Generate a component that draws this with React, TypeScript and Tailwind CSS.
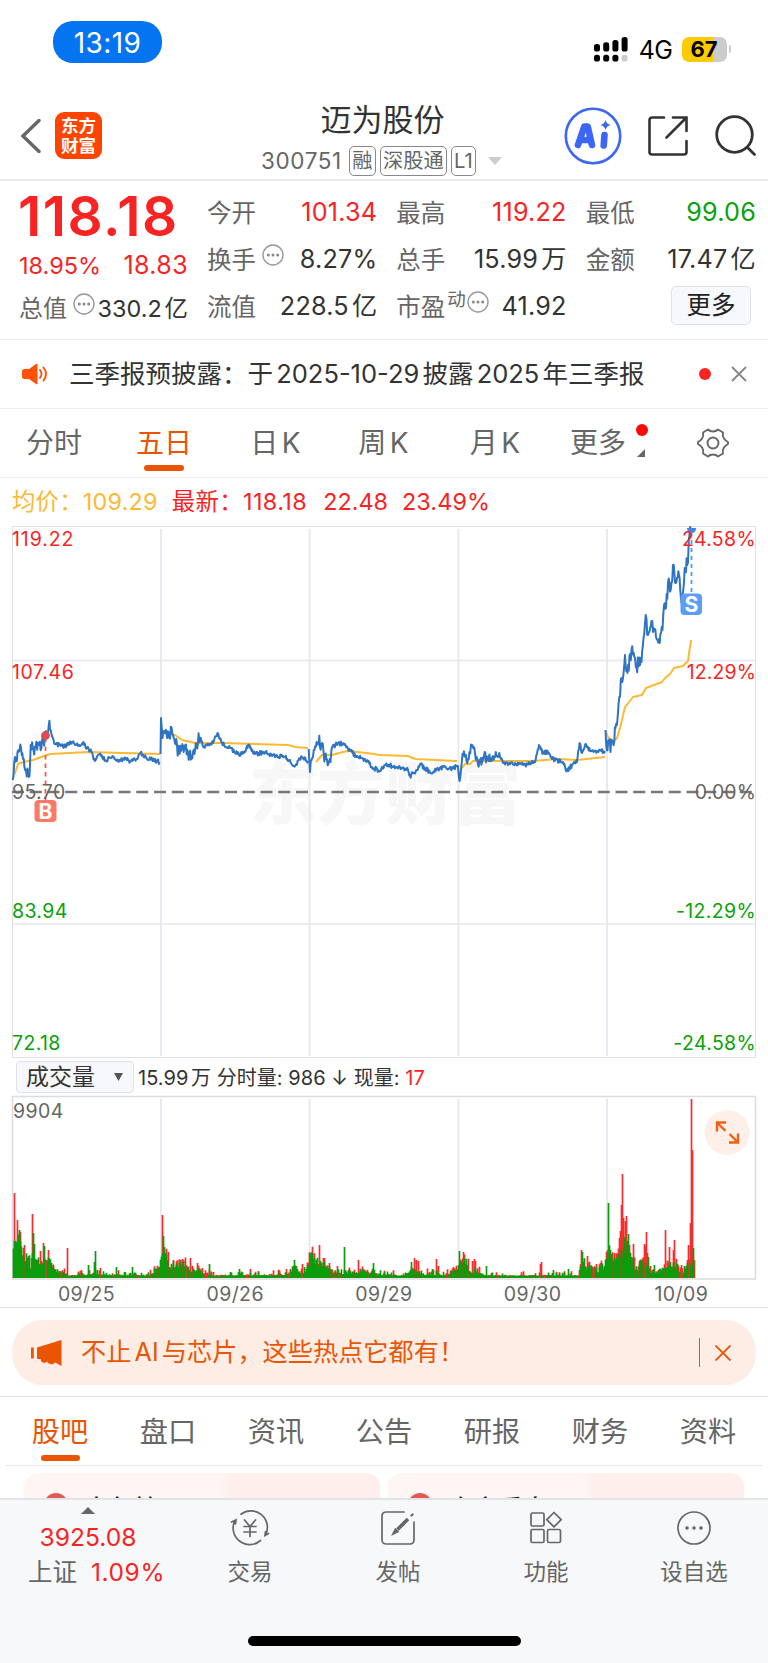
import { ReactNode } from "react";
import { clsx } from "clsx";

type Point = [number, number];

// price line per trading day: [x, y]
const PRICE_DAYS: Point[][] = [
  [
    [12.7, 780], [15, 757], [17.5, 752], [21, 748], [23, 759], [26, 770], [29.5, 776], [30.7, 745],
    [33.5, 750], [38.5, 745], [43.5, 741], [46, 731], [48, 733], [48.7, 726], [52, 736], [55, 744], [65, 746],
    [72, 742], [78, 746], [83.5, 742], [87, 748], [91.5, 752], [95, 761], [99.5, 754], [106, 761],
    [112.5, 756], [118, 761], [127.5, 758], [130, 762], [137.5, 759], [140.5, 753], [146.5, 758],
    [159.5, 762],
  ],
  [
    [160.5, 754], [161, 718], [162.5, 738], [166.5, 733], [173, 735], [177, 745], [179, 753],
    [183, 748], [188, 753], [193, 752], [200, 738], [204, 747], [213, 743], [217.5, 733], [222, 743],
    [230, 748], [237, 754], [242, 754], [249, 745], [255, 754], [265, 752], [272, 756], [283, 756],
    [290, 760], [294, 766], [302, 757], [308, 761],
  ],
  [
    [308.7, 749], [310, 772], [313, 757], [318, 744], [322, 743], [325, 757], [329, 762], [332, 747],
    [338, 743], [345, 744], [350, 751], [358, 757], [368, 761], [372, 767], [380, 771], [385, 765],
    [400, 767], [408, 770], [410, 776], [417, 770], [420, 764], [431, 773], [443, 767], [452, 769],
    [457, 766],
  ],
  [
    [457.7, 765], [459.6, 781], [462.5, 754], [468, 759], [471.7, 745], [475, 753], [478, 765],
    [484, 756], [488, 760], [493, 756], [500, 757], [503, 763], [515, 763], [523, 765], [535, 762],
    [539, 745], [543, 753], [548, 752], [552, 759], [563, 762], [567, 771], [572, 765], [577, 762],
    [579.6, 743], [582, 753], [585, 745], [590, 751], [597, 752], [605, 751],
  ],
  [
    [605.5, 730], [606.7, 750], [609, 742], [610.5, 752], [613, 742], [615.5, 728], [617, 725],
    [618.7, 702], [621.5, 678], [623, 678], [625, 655], [627.5, 673], [631.5, 650], [636.5, 667],
    [641.5, 662], [643.5, 638], [645.7, 615], [648, 635], [651.5, 621], [653, 632], [656, 637],
    [659.7, 643], [662.5, 630], [664, 605], [666, 608], [668, 583], [670.7, 590], [673, 565],
    [675.7, 583], [679, 575], [681.5, 603], [683.3, 590], [684.7, 568], [687.3, 565], [689.5, 535],
    [691.3, 528],
  ],
];

const AVERAGE_DAYS: Point[][] = [
  [[14.7, 774], [18, 764], [23, 762], [33, 760], [50, 754], [88, 752], [160, 754]],
  [[162, 733], [175, 735], [182, 740], [195, 743], [222, 743], [288, 745], [295, 747], [308, 748]],
  [[316, 762], [322, 755], [332, 755], [347, 751], [367, 753], [380, 755], [408, 756], [415, 759], [457, 761]],
  [[462, 768], [465, 764], [470, 764], [473, 761], [533, 761], [557, 759], [577, 760], [605, 757]],
  [
    [606, 732], [608, 737], [613, 742], [617, 738], [620, 728], [625, 707], [633, 697], [642, 695],
    [646, 688], [662, 682], [665, 678], [670, 674], [674, 668], [683, 666], [688, 661], [689.5, 650],
    [691.3, 640],
  ],
];

// volume: base level along x, then single tall bars on top of it
const VOLUME_BASE: Point[] = [
  [13, 25], [16, 36], [20, 45], [22, 20], [27, 22], [30, 12], [33, 30], [36, 20], [42, 12], [47, 18],
  [52, 11], [58, 6], [64, 6], [67, 2], [90, 3], [97, 5], [100, 3], [150, 3], [158, 9], [163, 30],
  [167, 14], [175, 10], [182, 14], [190, 8], [200, 6], [212, 2], [280, 3], [290, 4], [294, 14],
  [300, 4], [306, 8], [311, 22], [318, 12], [324, 13], [332, 6], [345, 5], [356, 6], [370, 5],
  [378, 4], [400, 2], [408, 6], [413, 8], [422, 4], [445, 3], [457, 8], [462, 22], [470, 6], [478, 6],
  [485, 2], [578, 2], [583, 20], [586, 9], [591, 12], [597, 7], [605, 15], [609, 26], [613, 17],
  [620, 22], [627, 30], [631, 18], [637, 8], [645, 20], [650, 6], [658, 8], [664, 10], [672, 10],
  [676, 12], [682, 6], [688, 12], [691, 14], [693, 12],
];

const RED_BARS: Point[] = [
  [14, 85], [17, 58], [32, 64], [23, 30], [40, 27], [43, 35], [48, 28], [67, 30], [81, 8], [100, 10],
  [162, 63], [168, 26], [173, 18], [180, 18], [190, 20], [197, 15], [202, 10], [250, 9], [286, 9],
  [302, 14], [319, 33], [323, 20], [337, 12], [358, 18], [414, 20], [416, 18], [418, 17], [436, 19],
  [438, 12], [463, 26], [472, 17], [474, 19], [475, 17], [540, 14], [541, 16], [581, 28], [587, 22],
  [600, 15], [606, 26], [617, 25], [619, 40], [620, 47], [621, 73], [622, 104], [623, 60], [625, 57],
  [626, 62], [627, 30], [633, 34], [644, 34], [646, 46], [647, 25], [665, 48], [669, 31], [674, 38],
  [673, 28], [688, 33], [690, 55], [691, 179], [692, 128], [694, 18],
];

const GREEN_BARS: Point[] = [
  [19, 48], [16, 36], [33, 45], [44, 32], [95, 27], [94, 16], [88, 13], [116, 11], [132, 11],
  [163, 42], [164, 31], [183, 17], [209, 14], [239, 9], [294, 18], [312, 24], [344, 31], [373, 15],
  [411, 16], [432, 9], [459, 27], [464, 20], [486, 12], [553, 8], [568, 9], [582, 26], [608, 75],
  [610, 28], [624, 41], [628, 44], [648, 21], [654, 13], [670, 16], [677, 14], [687, 15], [693, 30],
];

const rand = (n: number) => {
  const v = Math.sin(n * 127.1 + 11.7) * 43758.5453;
  return v - Math.floor(v);
};

const levelAt = (points: Point[], x: number) => {
  for (let i = 1; i < points.length; i++) {
    const [x0, y0] = points[i - 1];
    const [x1, y1] = points[i];
    if (x <= x1) return y0 + ((y1 - y0) * (x - x0)) / (x1 - x0);
  }
  return points[points.length - 1][1];
};

const noiseAt = (x: number) => {
  if (x < 50 || x > 606) return 8;
  if ((x > 162 && x < 200) || (x > 308 && x < 332)) return 8;
  if (x > 457 && x < 500) return 5;
  return 2.2;
};

const pricePath = (points: Point[]) => {
  const out: Point[] = [points[0]];
  points.slice(1).forEach((p, i) => {
    const prev = points[i];
    const steps = Math.max(1, Math.round((p[0] - prev[0]) / 0.7));
    for (let s = 1; s <= steps; s++) {
      const x = prev[0] + ((p[0] - prev[0]) * s) / steps;
      const y = prev[1] + ((p[1] - prev[1]) * s) / steps;
      out.push([x, s === steps ? y : y + (rand(x) - 0.5) * 2 * noiseAt(x)]);
    }
  });
  return "M" + out.map(([x, y]) => `${x.toFixed(1)} ${Math.max(527, y).toFixed(1)}`).join("L");
};

const linePath = (points: Point[]) => "M" + points.map((p) => p.join(" ")).join("L");

const barPath = (bars: Point[]) => bars.map(([x, h]) => `M${x + 0.5} 1278v${-h}`).join("");

const baseBars = Array.from({ length: 681 }, (_, i): Point => {
  const x = 13 + i;
  return [x, Math.max(2.5, levelAt(VOLUME_BASE, x) * (0.7 + rand(x) * 0.6) + (rand(x + 900) > 0.82 ? 3 : 0))];
});
const baseRed = baseBars
  .filter(([x]) => rand(x + 300) > 0.6)
  .map(([x, h]): Point => [x, h * 1.25]);
const baseGreen = baseBars.filter(([x]) => rand(x + 300) <= 0.78);

const MoreDots = ({ className }: { className?: string }) => (
  <svg viewBox="0 0 22 22" className={clsx("size-[22px] shrink-0", className)}>
    <circle cx="11" cy="11" r="10" fill="none" stroke="#999" strokeWidth="1.4" />
    {[6.3, 11, 15.7].map((x) => (
      <circle key={x} cx={x} cy="11" r="1.5" fill="#888" />
    ))}
  </svg>
);

const StatusBar = () => (
  <div className="flex h-[82px] items-start justify-between pl-[53px] pr-[37px]">
    <div className="mt-[21px] flex h-[42px] w-[109px] items-center justify-center rounded-[20px] bg-[#0474f0] pt-[1px] text-[28px] tracking-[0.4px] text-white">
      13:19
    </div>
    <div className="mt-[36px] flex h-[26px] items-center">
      <svg viewBox="0 0 34 25" className="mr-[11px] h-[25px] w-[34px]">
        {[7, 5.3, 3, 0].map((y, i) => (
          <rect key={i} x={i * 9.2} y={y} width="6" height={14.5 - y} rx="2.6" fill="#000" />
        ))}
        {[0, 1, 2, 3].map((i) => (
          <rect key={i} x={i * 9.2} y="17.7" width="6" height="6.8" rx="2.6" fill={i === 3 ? "#ccc" : "#000"} />
        ))}
      </svg>
      <span className="mr-[9px] pt-[2px] text-[25px] tracking-[-0.5px] text-black">4G</span>
      <div className="flex h-[25px] w-[45px] items-center justify-center rounded-[7px] bg-linear-to-r from-[#fecb00] from-[68%] to-[#ccc] to-[68%] text-[22px] font-bold text-black">
        67
      </div>
      <div className="ml-[2px] h-[8px] w-[2.5px] rounded-r-full bg-[#ccc]" />
    </div>
  </div>
);

const Badge = ({ children }: { children: ReactNode }) => (
  <span className="flex h-[30px] shrink-0 items-center whitespace-nowrap rounded-[5px] border-[1.4px] border-[#888] px-[2.5px] text-[20.2px]">
    {children}
  </span>
);

const Header = () => (
  <div className="flex h-[99px] items-start border-b-2 border-[#eaeaea]">
    <svg viewBox="0 0 20 34" className="ml-[21px] mt-[37px] h-[34px] w-[20px]">
      <path d="M18 1.5 2 17l16 15.5" fill="none" stroke="#666" strokeWidth="3.4" strokeLinecap="round" />
    </svg>
    <div className="ml-[14px] mt-[30px] flex h-[47px] w-[47px] flex-col items-center justify-center rounded-[9px] bg-[#ff4400] text-[17.5px] font-bold leading-[19.5px] text-white">
      <span>东方</span>
      <span>财富</span>
    </div>
    <div className="ml-[159px] flex w-[242px] flex-col items-center">
      <h1 className="flex h-[59px] items-center pl-[1px] pt-[16px] text-[31px] leading-[36px] text-[#333]">迈为股份</h1>
      <div className="mt-[5px] flex h-[30px] items-center self-start text-[22.5px] text-[#666]">
        <span className="mr-[7px] tracking-[0.6px]">300751</span>
        <div className="flex shrink-0 gap-[3.5px]">
          <Badge>融</Badge>
          <Badge>深股通</Badge>
          <Badge>L1</Badge>
        </div>
        <svg viewBox="0 0 14 8" className="ml-[12px] h-[8px] w-[14px] shrink-0">
          <path d="M0 0h14L7 8z" fill="#ccc" />
        </svg>
      </div>
    </div>
    <svg viewBox="0 0 58 58" className="ml-[61px] mt-[25px] size-[58px]">
      <circle cx="29" cy="29" r="27.2" fill="none" stroke="#3c66f5" strokeWidth="2.6" />
      <path
        d="M14 38 20.3 19.5h3.4L28 38M18 33h8"
        fill="none"
        stroke="#3c66f5"
        strokeWidth="6.6"
        strokeLinecap="round"
        strokeLinejoin="round"
      />
      <path d="m40.5 28-.8 10.5" stroke="#3c66f5" strokeWidth="6.6" strokeLinecap="round" />
      <path d="M41.5 13q.9 4 5 5-4.100 1-5 5-.9-4-5-5 4.100-1 5-5z" fill="#3c66f5" />
    </svg>
    <svg viewBox="0 0 40 40" className="ml-[26px] mt-[34px] size-[40px]" fill="none" stroke="#333" strokeWidth="2.6" strokeLinecap="round">
      <path d="M16 1.5H4A2.5 2.5 0 0 0 1.5 4v32A2.5 2.5 0 0 0 4 38.5h32a2.5 2.5 0 0 0 2.5-2.5V25" />
      <path d="M25 1.5h13.5V15M38 2 18.5 21.5" />
    </svg>
    <svg viewBox="0 0 42 42" className="ml-[27px] mt-[33px] size-[42px]" fill="none" stroke="#333" strokeWidth="2.8" strokeLinecap="round">
      <circle cx="19.5" cy="19.5" r="17.8" />
      <path d="m32.5 32.5 7 7" />
    </svg>
  </div>
);

const Cell = ({ label, value, tone }: { label: ReactNode; value: string; tone?: string }) => (
  <div className="flex items-center justify-between">
    <span className="flex items-center text-[24.5px] text-[#666]">{label}</span>
    <span className={clsx("whitespace-nowrap text-[25.2px] tracking-[0.2px]", tone ?? "text-[#333]")}>{value}</span>
  </div>
);

const Quote = () => (
  <div className="flex h-[159px] gap-[19px] border-b border-[#eee] pl-[19px] pr-[12px] pt-[8px] text-[25px]">
    <div className="w-[169px] shrink-0 text-[#f82424]">
      <div className="-ml-[1px] flex h-[54px] items-center text-[55px] font-semibold leading-none tracking-[1.5px]">118.18</div>
      <div className="flex h-[43px] items-center justify-between pt-[2px] text-[23.5px]">
        <span>18.95%</span>
        <span className="text-[25px] tracking-[0.4px]">18.83</span>
      </div>
      <div className="flex h-[43px] items-center pt-[2px]">
        <span className="text-[24px] text-[#666]">总值</span>
        <MoreDots className="-mt-[10px] ml-[6px]" />
        <span className="ml-auto whitespace-nowrap text-[23.4px] text-[#333]">330.2亿</span>
      </div>
    </div>
    <div className="grid flex-1 grid-cols-3 grid-rows-[47px_47px_47px] gap-x-[19px] pt-[0.5px]">
      <Cell label="今开" value="101.34" tone="text-[#f82424]" />
      <Cell label="最高" value="119.22" tone="text-[#f82424]" />
      <Cell label="最低" value="99.06" tone="text-[#09a209]" />
      <Cell label={<>换手<MoreDots className="-mt-[10px] ml-[6px]" /></>} value="8.27%" />
      <Cell label="总手" value="15.99万" />
      <Cell label="金额" value="17.47亿" />
      <Cell label="流值" value="228.5亿" />
      <Cell
        label={
          <>
            市盈<span className="-mt-4 ml-[2px] text-[18.5px]">动</span>
            <MoreDots className="-mt-[10px] ml-[1px]" />
          </>
        }
        value="41.92"
      />
      <button className="mr-[5px] mt-[2px] h-[39px] w-[80px] justify-self-end rounded-[5px] border border-[#dfe1e8] bg-[#f7f8fb] text-[24.5px] leading-none text-[#222]">
        更多
      </button>
    </div>
  </div>
);

const Notice = () => (
  <div className="flex h-[69px] items-center border-b border-[#eee] pl-[22px] pr-[21px]">
    <svg viewBox="0 0 26 22" className="h-[22px] w-[26px]">
      <path d="M2.500 6H7l7-5q1.500-.8 1.500 1v18q0 1.800-1.500 1l-7-5H2.500Q0 16 0 13.500v-5Q0 6 2.500 6z" fill="#ff5206" />
      <path d="M18 7q3 4 0 8M21.500 4.500q5 6.500 0 13" fill="none" stroke="#ff5206" strokeWidth="1.9" strokeLinecap="round" />
    </svg>
    <span className="ml-[21px] whitespace-nowrap text-[25.5px] text-[#333]">三季报预披露：于2025-10-29披露2025年三季报</span>
    <span className="ml-auto size-[12px] rounded-full bg-[#f82424]" />
    <svg viewBox="0 0 16 16" className="ml-[20px] size-[16px]">
      <path d="m1 1 14 14M15 1 1 15" stroke="#888" strokeWidth="1.9" />
    </svg>
  </div>
);

const PERIODS = [
  { name: "分时", width: "w-[108px]" },
  { name: "五日", width: "w-[112px]" },
  { name: "日K", width: "w-[111px]" },
  { name: "周K", width: "w-[105px]" },
  { name: "月K", width: "w-[118px]" },
];

const PeriodTabs = () => (
  <div className="flex h-[69px] items-center border-b border-[#eee] text-[28px] text-[#666]">
    {PERIODS.map(({ name, width }) => (
      <div
        key={name}
        className={clsx("relative flex h-full items-center justify-center", width, name === "五日" && "text-[#ea5504]")}
      >
        {name}
        {name === "五日" && <span className="absolute bottom-[6px] h-[6px] w-[40px] rounded-[3px] bg-[#ea5504]" />}
      </div>
    ))}
    <div className="relative ml-[16px] flex h-full items-center">
      更多
      <span className="absolute left-[66px] top-[15px] size-[12px] rounded-full bg-[#fb0a0a]" />
      <svg viewBox="0 0 8 8" className="absolute left-[67px] top-[40px] size-[8px]">
        <path d="M8 0v8H0z" fill="#666" />
      </svg>
    </div>
    <svg viewBox="0 0 32 30" className="ml-[71px] h-[30px] w-[32px]" fill="none" stroke="#666" strokeWidth="1.9">
      <path
        d="M11 1.500q2 2 5 2t5-2l5 3q-.7 3.500.8 5.800T31 14v2q-2.700 1.400-4.200 3.700T26 25.500l-5 3q-2-2-5-2t-5 2l-5-3q.7-3.500-.8-5.800T1 16v-2q2.700-1.400 4.200-3.700T6 4.500z"
        strokeLinejoin="round"
      />
      <circle cx="16" cy="15" r="5.5" />
    </svg>
  </div>
);

const PriceChart = () => (
  <svg viewBox="0 525 768 533" className="block h-[533px] w-[768px]" fontSize="19.5" letterSpacing="0.35">
    <text x="249" y="819" fontSize="68" fontWeight="900" fill="#f7f7f7" letterSpacing="0">东方财富</text>
    <g stroke="#e6e8f0" fill="none">
      <path d="M161 529v527M309.5 529v527M458.5 529v527M607 529v527" strokeWidth="1.8" />
      <path d="M12 660.5h743M12 924h743" strokeWidth="1.4" />
      <path d="M12.5 526.5h743v531h-743z" stroke="#dfdfe3" strokeWidth="1" />
    </g>
    <path d="M12 792h743" stroke="#777" strokeWidth="2.3" strokeDasharray="12 5.75" />
    <g fill="none" strokeLinejoin="round">
      {AVERAGE_DAYS.map((day, i) => (
        <path key={i} d={linePath(day)} stroke="#fdb933" strokeWidth="2" />
      ))}
      {PRICE_DAYS.map((day, i) => (
        <path key={i} d={pricePath(day)} stroke="#2f73c3" strokeWidth="2" />
      ))}
    </g>
    <path d="M45.5 738v62" stroke="#fa5a4b" strokeWidth="1.8" strokeDasharray="4.5 4" />
    <circle cx="45.5" cy="735.5" r="4.4" fill="#dc4c50" />
    <rect x="34.5" y="800" width="22" height="22" rx="4" fill="#fe7868" />
    <text x="45.5" y="818.5" fontSize="21" fontWeight="700" fill="#fff" textAnchor="middle">B</text>
    <path d="M691.5 532v62" stroke="#4f97ff" strokeWidth="1.8" strokeDasharray="4 4" />
    <path d="M687 528h9q0 5-4.500 5t-4.500-5z" fill="#3d86ef" />
    <rect x="680.5" y="593.5" width="21.5" height="21.5" rx="4" fill="#5b9dfb" />
    <text x="691.5" y="612" fontSize="21" fontWeight="700" fill="#fff" textAnchor="middle">S</text>
    <g fill="#f82424">
      <text x="12" y="546" letterSpacing="0.9">119.22</text>
      <text x="12" y="678.5" letterSpacing="0.6">107.46</text>
      <text x="756" y="546" textAnchor="end">24.58%</text>
      <text x="756" y="678.5" textAnchor="end" letterSpacing="0.1">12.29%</text>
    </g>
    <g fill="#666">
      <text x="12" y="798.5">95.70</text>
      <text x="756" y="798.5" textAnchor="end" letterSpacing="0.1">0.00%</text>
    </g>
    <g fill="#09a209">
      <text x="12" y="917.5">83.94</text>
      <text x="12" y="1050">72.18</text>
      <text x="756" y="917.5" textAnchor="end">-12.29%</text>
      <text x="756" y="1050" textAnchor="end">-24.58%</text>
    </g>
  </svg>
);

const VolumeBar = () => (
  <div className="flex h-[37px] items-center pl-[16px] text-[20px] text-[#333]">
    <button className="flex h-[32px] w-[118px] items-center justify-between rounded-[4px] border border-[#dfe1e8] bg-[#f7f8fb] pl-[9px] pr-[10px] pt-[1px] text-[23px] leading-none">
      成交量
      <svg viewBox="0 0 9 8" className="h-[8px] w-[9px]">
        <path d="M0 0h9L4.5 8z" fill="#555" />
      </svg>
    </button>
    <span className="ml-[4px] whitespace-pre pt-[2px] tracking-[0.05px]">15.99万 分时量: 986 ↓ 现量: </span>
    <span className="pt-[2px] text-[#f82424]">17</span>
  </div>
);

const VolumeChart = () => (
  <svg viewBox="0 1095 768 212" className="block h-[212px] w-[768px]" fontSize="19.5" letterSpacing="0.4" fill="#666">
    <path d="M161 1099v178M309.5 1099v178M458.5 1099v178M607 1099v178" stroke="#e6e8f0" strokeWidth="1.8" />
    <path d="M12.5 1096.5h743v182.5h-743z" fill="none" stroke="#dcdce0" strokeWidth="1.6" />
    <path d={barPath([...baseRed, ...RED_BARS])} stroke="#f82c2c" strokeWidth="1.7" />
    <path d={barPath([...baseGreen, ...GREEN_BARS])} stroke="#0a9c0a" strokeWidth="1.7" />
    <text x="13" y="1118">9904</text>
    {["09/25", "09/26", "09/29", "09/30", "10/09"].map((date, i) => (
      <text key={date} x={86.5 + i * 148.7} y="1301" textAnchor="middle">
        {date}
      </text>
    ))}
    <circle cx="727" cy="1132.5" r="22.5" fill="#fef0e9" />
    <g fill="none" stroke="#f06014" strokeWidth="2.4">
      <path d="M726 1122.5h-9v9M717 1122.5l8.500 8.500M729 1142.5h9v-9M738 1142.5l-8.500-8.500" />
    </g>
  </svg>
);

const PromoBanner = () => (
  <div className="border-y border-[#e4e4ea] px-[12px] pb-[11px] pt-[12px]">
    <div className="flex h-[65px] items-center rounded-[31px] bg-[#feede5] pl-[19px] pr-[25px] text-[#ea5504]">
      <svg viewBox="0 0 31 26" className="h-[26px] w-[31px]" fill="#ea5504">
        <path d="M0 7.500h2.800v11H0zM6 7.500 30.500 0v26l-4.500-2.500-2-1-2.500 2-4-1-1.500-2-2 1.500-3.500-1-1-3H6z" />
      </svg>
      <span className="ml-[19px] whitespace-nowrap text-[25.2px]">不止AI与芯片，这些热点它都有！</span>
      <span className="ml-auto h-[29px] w-[1.5px] bg-[#ea5504]" />
      <svg viewBox="0 0 16 16" className="ml-[15px] size-[16px]">
        <path d="m.5.5 15 15M15.500.5l-15 15" stroke="#ea5504" strokeWidth="1.9" />
      </svg>
    </div>
  </div>
);

const SECTIONS = ["股吧", "盘口", "资讯", "公告", "研报", "财务", "资料"];

const SectionTabs = () => (
  <div className="mx-[6px] flex h-[69px] border-b-[1.5px] border-[#e8e8ea] text-[28.2px] text-[#666]">
    {SECTIONS.map((name, i) => (
      <div
        key={name}
        className={clsx("relative flex w-[108px] items-center justify-center pt-[3px]", i === 0 && "text-[#ea5504]")}
      >
        {name}
        {i === 0 && <span className="absolute bottom-[4px] h-[6px] w-[39px] rounded-[3px] bg-[#ea5504]" />}
      </div>
    ))}
  </div>
);

const Card = ({ title }: { title: string }) => (
  <div className="flex h-[60px] flex-1 items-start rounded-t-[14px] bg-linear-to-r from-[#fff6f4] from-55% to-[#feefec] to-58% pl-[20px] pt-[20px]">
    <span className="size-[24px] shrink-0 rounded-full bg-[#e05a54]" />
    <span className="ml-[16px] mt-[1px] text-[25px] font-medium leading-[30px] text-[#222]">{title}</span>
  </div>
);

const TABS = [
  {
    name: "交易",
    icon: (
      <path d="M11 6.200A16.500 16.500 0 0 1 35.800 26.500M30.500 32.500A16.500 16.500 0 0 1 5 12.500M1.500 14l4.500-2-.5 4M38.500 25.500l-3.500 2 .5-4M14.500 12l5.500 6.500 5.500-6.500M14 18.500h12M14 24h12M20 18.500V28.500" />
    ),
  },
  {
    name: "发帖",
    icon: (
      <>
        <path d="M26 4H8a4 4 0 0 0-4 4v24a4 4 0 0 0 4 4h24a4 4 0 0 0 4-4V14" />
        <path d="m19.5 21.5 10.5-10.5" strokeWidth="3.6" strokeLinecap="butt" />
        <path d="m15.5 25.5 2-4 2 2zM33.5 7.5l1-1" fill="#666" strokeWidth="2.2" />
      </>
    ),
  },
  {
    name: "功能",
    icon: (
      <>
        <rect x="5" y="5" width="13" height="13" rx="1.5" />
        <rect x="5" y="21.5" width="13" height="13" rx="1.5" />
        <rect x="21.5" y="21.5" width="13" height="13" rx="1.5" />
        <path d="m28 4.500 7.200 7.200-7.200 7.200-7.200-7.200z" strokeLinejoin="round" />
      </>
    ),
  },
  {
    name: "设自选",
    icon: (
      <>
        <circle cx="20" cy="20" r="16" />
        <path d="M13 20h.01M20 20h.01M27 20h.01" strokeWidth="3.6" />
      </>
    ),
  },
];

const BottomBar = () => (
  <div className="relative h-[165px] border-t-2 border-[#e2e3e6] bg-[#f7f8fa]">
    <div className="flex text-[22.5px] text-[#666]">
      <div className="flex w-[176px] flex-col items-center pt-[7px]">
        <svg viewBox="0 0 14 7" className="h-[7px] w-[14px]">
          <path d="M0 7h14L7 0z" fill="#666" />
        </svg>
        <span className="mt-[7px] text-[24.6px] leading-[32px] text-[#f82424]">3925.08</span>
        <div className="mt-[2px] ml-[17px] flex gap-[14px] text-[24.5px] leading-[34px]">
          上证 <span className="tracking-[0.6px] text-[#f82424]">1.09%</span>
        </div>
      </div>
      {TABS.map(({ name, icon }) => (
        <div key={name} className="flex w-[148px] flex-col items-center pt-[8px]">
          <svg viewBox="0 0 40 40" className="size-[40px]" fill="none" stroke="#666" strokeWidth="1.7" strokeLinecap="round">
            {icon}
          </svg>
          <span className="mt-[7px] leading-[34px]">{name}</span>
        </div>
      ))}
    </div>
    <div className="absolute bottom-[17px] left-[248px] h-[10px] w-[273px] rounded-full bg-black" />
  </div>
);

export default function App() {
  return (
    <div className="h-[1663px] w-[768px] overflow-hidden bg-white font-['Inter','Noto_Sans_CJK_SC',sans-serif] leading-none [text-autospace:normal]">
      <StatusBar />
      <Header />
      <Quote />
      <Notice />
      <PeriodTabs />
      <div className="flex h-[47px] items-center pl-[12px] pt-[1px] text-[23.4px] text-[#f82424]">
        <span className="tracking-[0.2px] text-[#fdb933]">均价：109.29</span>
        <span className="ml-[14px] tracking-[0.4px]">最新：118.18</span>
        <span className="ml-[16px]">22.48</span>
        <span className="ml-[14px] tracking-[0.1px]">23.49%</span>
      </div>
      <PriceChart />
      <VolumeBar />
      <VolumeChart />
      <PromoBanner />
      <SectionTabs />
      <div className="flex h-[32px] gap-[8px] overflow-hidden px-[24px] pt-[7px]">
        <Card title="大包恰" />
        <Card title="全方看盘" />
      </div>
      <BottomBar />
    </div>
  );
}
